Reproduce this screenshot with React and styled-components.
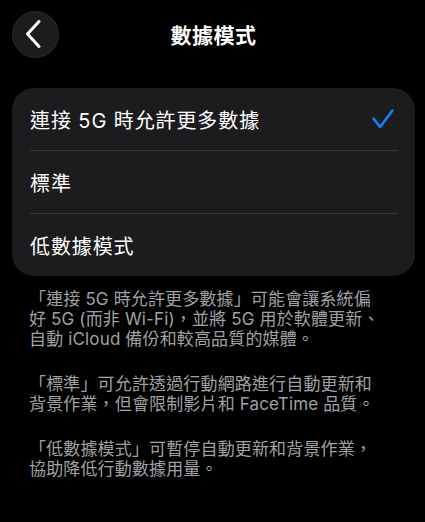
import React from 'react';
import styled, { createGlobalStyle } from 'styled-components';

const GlobalStyle = createGlobalStyle`
    html, body {
        margin: 0;
        padding: 0;
        background: #000;
    }
    body {
        font-family: Inter, "Noto Sans CJK TC", sans-serif;
        color: #fff;
        -webkit-font-smoothing: antialiased;
    }
`;

const options = [
    { label: '連接 5G 時允許更多數據', selected: true },
    { label: '標準' },
    { label: '低數據模式' },
];

const notes = [
    ['「連接 5G 時允許更多數據」可能會讓系統偏', '好 5G (而非 Wi-Fi)，並將 5G 用於軟體更新、', '自動 iCloud 備份和較高品質的媒體。'],
    ['「標準」可允許透過行動網路進行自動更新和', '背景作業，但會限制影片和 FaceTime 品質。'],
    ['「低數據模式」可暫停自動更新和背景作業，', '協助降低行動數據用量。'],
];

export default function App() {
    return (
        <Page>
            <GlobalStyle />
            <Header>
                <BackButton aria-label="返回">
                    <svg width="18" height="28" viewBox="0 0 18 28" fill="none">
                        <path d="M14 1.5 L2.5 14 L14 26.5" stroke="#fff" strokeWidth="3" strokeLinecap="round" strokeLinejoin="round" />
                    </svg>
                </BackButton>
                <Title>數據模式</Title>
                <span />
            </Header>

            <Card>
                {options.map((opt) => (
                    <Row key={opt.label}>
                        <RowLabel>{opt.label}</RowLabel>
                        {opt.selected && (
                            <Check width="24" height="22" viewBox="0 0 24 22" fill="none">
                                <path d="M2.5 10.5 L9 19 L21.5 2.5" stroke="#0a84ff" strokeWidth="2.6" strokeLinecap="round" strokeLinejoin="round" />
                            </Check>
                        )}
                    </Row>
                ))}
            </Card>

            <Footer>
                {notes.map((lines, i) => (
                    <Note key={i}>
                        {lines.map((line) => (
                            <Line key={line}>{line}</Line>
                        ))}
                    </Note>
                ))}
            </Footer>
        </Page>
    );
}

const Page = styled.div`
    width: 425px;
    min-height: 522px;
    box-sizing: border-box;
    padding: 10px 10px 0 12px;
    background: #000;
`;

const Header = styled.div`
    display: grid;
    grid-template-columns: 47px 1fr 47px;
    align-items: center;
    height: 48px;
`;

const BackButton = styled.button`
    width: 47px;
    height: 47px;
    border-radius: 50%;
    border: 1px solid #2a2a2c;
    background: #1c1c1e;
    display: flex;
    align-items: center;
    justify-content: center;
    padding: 0 3px 0 0;
    cursor: pointer;
`;

const Title = styled.h1`
    margin: 0;
    text-align: center;
    font-size: 21px;
    font-weight: 700;
    letter-spacing: 0.5px;
    color: #fff;
`;

const Card = styled.div`
    margin-top: 30px;
    background: #1c1c1e;
    border-radius: 22px;
    padding: 0 17px 0 18px;
`;

const Row = styled.div`
    display: flex;
    align-items: center;
    justify-content: space-between;
    height: 62px;
    & + & {
        border-top: 1px solid #38383a;
    }
`;

const RowLabel = styled.span`
    font-size: 20px;
    color: #fff;
    letter-spacing: 0.9px;
`;

const Check = styled.svg`
    margin-right: 3px;
`;

const Footer = styled.div`
    margin-top: 13px;
    padding-left: 17px;
    display: flex;
    flex-direction: column;
    gap: 25px;
`;

const Note = styled.p`
    margin: 0;
    font-size: 17px;
    line-height: 20px;
    letter-spacing: 0.15px;
    color: #a0a0a6;
`;

const Line = styled.span`
    display: block;
    white-space: nowrap;
`;
